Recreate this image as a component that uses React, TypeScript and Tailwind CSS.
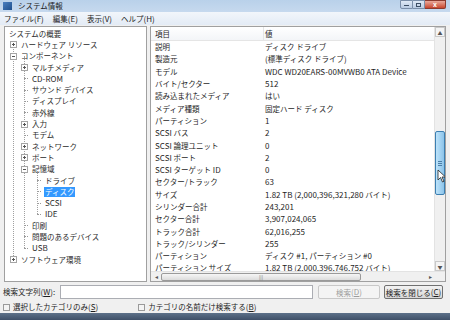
import React from 'react';

type Node = { label: string; level: number; box?: '+' | '-'; selected?: boolean };

const tree: Node[] = [
  { label: 'システムの概要', level: 0 },
  { label: 'ハードウェア リソース', level: 1, box: '+' },
  { label: 'コンポーネント', level: 1, box: '-' },
  { label: 'マルチメディア', level: 2, box: '+' },
  { label: 'CD-ROM', level: 2 },
  { label: 'サウンド デバイス', level: 2 },
  { label: 'ディスプレイ', level: 2 },
  { label: '赤外線', level: 2 },
  { label: '入力', level: 2, box: '+' },
  { label: 'モデム', level: 2 },
  { label: 'ネットワーク', level: 2, box: '+' },
  { label: 'ポート', level: 2, box: '+' },
  { label: '記憶域', level: 2, box: '-' },
  { label: 'ドライブ', level: 3 },
  { label: 'ディスク', level: 3, selected: true },
  { label: 'SCSI', level: 3 },
  { label: 'IDE', level: 3 },
  { label: '印刷', level: 2 },
  { label: '問題のあるデバイス', level: 2 },
  { label: 'USB', level: 2 },
  { label: 'ソフトウェア環境', level: 1, box: '+' },
];

const rows: [string, string][] = [
  ['説明', 'ディスク ドライブ'],
  ['製造元', '(標準ディスク ドライブ)'],
  ['モデル', 'WDC WD20EARS-00MVWB0 ATA Device'],
  ['バイト/セクター', '512'],
  ['読み込まれたメディア', 'はい'],
  ['メディア種類', '固定ハード ディスク'],
  ['パーティション', '1'],
  ['SCSI バス', '2'],
  ['SCSI 論理ユニット', '0'],
  ['SCSI ポート', '2'],
  ['SCSI ターゲット ID', '0'],
  ['セクター/トラック', '63'],
  ['サイズ', '1.82 TB (2,000,396,321,280 バイト)'],
  ['シリンダー合計', '243,201'],
  ['セクター合計', '3,907,024,065'],
  ['トラック合計', '62,016,255'],
  ['トラック/シリンダー', '255'],
  ['パーティション', 'ディスク #1, パーティション #0'],
  ['パーティション サイズ', '1.82 TB (2,000,396,746,752 バイト)'],
];

const font = { fontFamily: '"Noto Sans CJK JP", "Liberation Sans", sans-serif' };
const ROW = 11.3;

// Meiryo UI draws kana/kanji narrower than Noto, so CJK runs get a smaller size
function T({ text }: { text: string }) {
  const parts = text.split(/([\u3000-\u30ff\u4e00-\u9fff\uff00-\uffef]+)/);
  return (
    <>
      {parts.map((p, i) =>
        i % 2 === 1 ? (
          <span key={i} className="text-[7.5px]">
            {p}
          </span>
        ) : (
          <React.Fragment key={i}>{p}</React.Fragment>
        )
      )}
    </>
  );
}

function ExpandBox({ kind }: { kind: '+' | '-' }) {
  return (
    <span className="relative z-10 flex h-[7px] w-[7px] shrink-0 items-center justify-center border border-[#a5a5a5] bg-white">
      <span className="absolute h-px w-[3px] bg-[#555]" />
      {kind === '+' && <span className="absolute h-[3px] w-px bg-[#555]" />}
    </span>
  );
}

function TreeRow({ node }: { node: Node }) {
  const indent = [3, 5, 16, 29][node.level];
  return (
    <div className="flex h-[11.3px] items-center whitespace-nowrap" style={{ paddingLeft: indent }}>
      {node.level > 0 &&
        (node.box ? (
          <ExpandBox kind={node.box} />
        ) : (
          <span className="ml-[3px] w-[4px] shrink-0 border-t border-dotted border-[#9a9a9a]" />
        ))}
      {node.level > 0 && <span className="w-[3px] shrink-0" />}
      <span
        className={
          node.selected
            ? 'bg-[#3399ff] px-px leading-[10px] text-white'
            : 'px-px leading-[10px] text-[#2a2a2a]'
        }
      >
        <T text={node.label} />
      </span>
    </div>
  );
}

// dotted guide between two rows (centres), at x
function Guide({ x, from, to }: { x: number; from: number; to: number }) {
  const top = 1 + ROW * from + ROW / 2;
  const height = ROW * (to - from);
  return (
    <span
      className="absolute border-l border-dotted border-[#a0a0a0]"
      style={{ left: x, top, height }}
    />
  );
}

function CheckBox({ label, u }: { label: string; u: string }) {
  return (
    <div className="flex items-center gap-[3px] whitespace-nowrap">
      <span className="h-[7px] w-[7px] border border-[#9a9a9a] bg-[#f4f4f4]" />
      <span>
        <T text={label} />(<span className="underline">{u}</span>)
      </span>
    </div>
  );
}

export default function App() {
  return (
    <div className="h-[320px] w-[450px] overflow-hidden bg-[#bdd3ea] text-[8px] leading-none" style={font}>
      {/* Title bar */}
      <div className="flex h-[12px] items-center bg-gradient-to-b from-[#b9d1ea] to-[#c6d9ee]">
        <span className="ml-[3px] mr-[6px] h-[8px] w-[9px] bg-gradient-to-br from-[#4a7fc0] to-[#1d4f8c]" />
        <span className="text-[7.5px] text-[#1b1b1b]">システム情報</span>
        <div className="ml-auto mr-[4px] flex self-start">
          <span className="flex h-[9px] w-[13px] items-center justify-center rounded-bl-[2px] border border-[#7a8ea8] bg-gradient-to-b from-[#dfe9f5] to-[#b9cbe2]">
            <span className="mt-[2px] h-px w-[5px] bg-[#3b4d63]" />
          </span>
          <span className="flex h-[9px] w-[12px] items-center justify-center border border-l-0 border-[#7a8ea8] bg-gradient-to-b from-[#dfe9f5] to-[#b9cbe2]">
            <span className="h-[4px] w-[5px] border border-[#3b4d63]" />
          </span>
          <span className="flex h-[9px] w-[21px] items-center justify-center rounded-br-[2px] border border-l-0 border-[#8c3b2f] bg-gradient-to-b from-[#e9a99b] to-[#c7452d] text-[7px] font-bold leading-none text-white">
            x
          </span>
        </div>
      </div>

      {/* Menu bar */}
      <div className="flex h-[13px] items-center gap-[9px] bg-gradient-to-b from-[#f2f6fb] to-[#e3ebf5] pl-[4px] text-[#1b1b1b]">
        <span><T text="ファイル" />(F)</span>
        <span><T text="編集" />(E)</span>
        <span><T text="表示" />(V)</span>
        <span><T text="ヘルプ" />(H)</span>
      </div>

      {/* Main body */}
      <div className="flex h-[295px] flex-col bg-[#f0f0f0]">
        <div className="flex h-[257px] gap-[3px] px-[4px] pt-[1px]">
          {/* Tree */}
          <div className="relative w-[143px] border border-[#a0a0a0] bg-white pt-[1px]">
            <Guide x={8} from={1} to={20} />
            <Guide x={19} from={2} to={19} />
            <Guide x={32} from={12} to={16} />
            {tree.map((n, i) => (
              <TreeRow key={i} node={n} />
            ))}
          </div>

          {/* Details */}
          <div className="flex min-w-0 flex-1 flex-col border border-[#a0a0a0] bg-white">
            <div className="flex min-h-0 flex-1 overflow-hidden">
              <div className="min-w-0 flex-1 overflow-hidden">
                <div className="flex h-[14px] items-center border-b border-[#e5e5e5] bg-gradient-to-b from-white to-[#f3f5f8] text-[#1e1e1e]">
                  <span className="w-[112px] pl-[4px]"><T text="項目" /></span>
                  <span className="flex h-full items-center border-l border-[#e5e5e5] pl-[1px]"><T text="値" /></span>
                </div>
                {rows.map(([k, v], i) => (
                  <div key={i} className="flex h-[12.3px] items-center whitespace-nowrap text-[#1e1e1e]">
                    <span className="w-[112px] shrink-0 pl-[4px]"><T text={k} /></span>
                    <span className="pl-[2px]"><T text={v} /></span>
                  </div>
                ))}
              </div>
              {/* Vertical scrollbar */}
              <div className="flex w-[11px] shrink-0 flex-col border-l border-[#e3e3e3] bg-[#f0f0f0]">
                <span className="flex h-[10px] items-center justify-center border border-[#c9c9c9] bg-[#f4f4f4] text-[5px] text-[#555]">
                  ▲
                </span>
                <div className="relative flex-1">
                  <div className="absolute left-0 right-0 top-[94px] flex h-[64px] items-center justify-center rounded-[2px] border border-[#3c7fb1] bg-gradient-to-r from-[#bde3fa] to-[#8cc4ea]">
                    <div className="flex flex-col gap-px">
                      <span className="h-px w-[4px] bg-[#4b7fa8]" />
                      <span className="h-px w-[4px] bg-[#4b7fa8]" />
                      <span className="h-px w-[4px] bg-[#4b7fa8]" />
                    </div>
                  </div>
                  {/* cursor */}
                  <svg className="absolute left-[2px] top-[132px]" width="10" height="14" viewBox="0 0 10 14">
                    <path d="M1 1 L1 11 L3.5 8.5 L5.5 13 L7 12.3 L5 8 L8.5 8 Z" fill="white" stroke="#222" strokeWidth="0.8" />
                  </svg>
                </div>
                <span className="flex h-[10px] items-center justify-center border border-[#c9c9c9] bg-[#f4f4f4] text-[5px] text-[#555]">
                  ▼
                </span>
              </div>
            </div>
            {/* Horizontal scrollbar */}
            <div className="flex h-[10px] shrink-0 items-center border-t border-[#e3e3e3] bg-[#f0f0f0]">
              <span className="w-[10px] text-center text-[6px] text-[#555]">◂</span>
              <div className="flex h-[8px] w-[200px] items-center justify-center rounded-[2px] border border-[#9a9a9a] bg-gradient-to-b from-[#f6f6f6] to-[#dcdcdc] text-[5px] text-[#777]">
                |||
              </div>
              <span className="ml-auto mr-[13px] text-[6px] text-[#555]">▸</span>
            </div>
          </div>
        </div>

        {/* Search row */}
        <div className="mt-[3px] flex h-[16px] items-center whitespace-nowrap px-[3px] text-[#1e1e1e]">
          <span className="w-[57px]">
            <T text="検索文字列" />(<span className="underline">W</span>):
          </span>
          <div className="h-[14px] w-[253px] border border-[#abadb3] bg-white" />
          <div className="ml-[5px] flex h-[14px] w-[62px] items-center justify-center rounded-[2px] border border-[#c8c8c8] bg-[#f4f4f4] text-[#9d9d9d]">
            <T text="検索" />(<span className="underline">D</span>)
          </div>
          <div className="ml-[4px] flex h-[14px] w-[59px] items-center justify-center rounded-[2px] border border-[#707070] bg-gradient-to-b from-[#f2f2f2] to-[#d8d8d8]">
            <T text="検索を閉じる" />(<span className="underline">C</span>)
          </div>
        </div>

        {/* Checkboxes */}
        <div className="mt-[2px] flex h-[12px] items-center gap-[40px] px-[3px] text-[#1e1e1e]">
          <CheckBox label="選択したカテゴリのみ" u="S" />
          <CheckBox label="カテゴリの名前だけ検索する" u="B" />
        </div>

        {/* Taskbar */}
        <div className="mt-auto h-[8px] bg-gradient-to-b from-[#5d7189] to-[#3f5068]" />
      </div>
    </div>
  );
}
